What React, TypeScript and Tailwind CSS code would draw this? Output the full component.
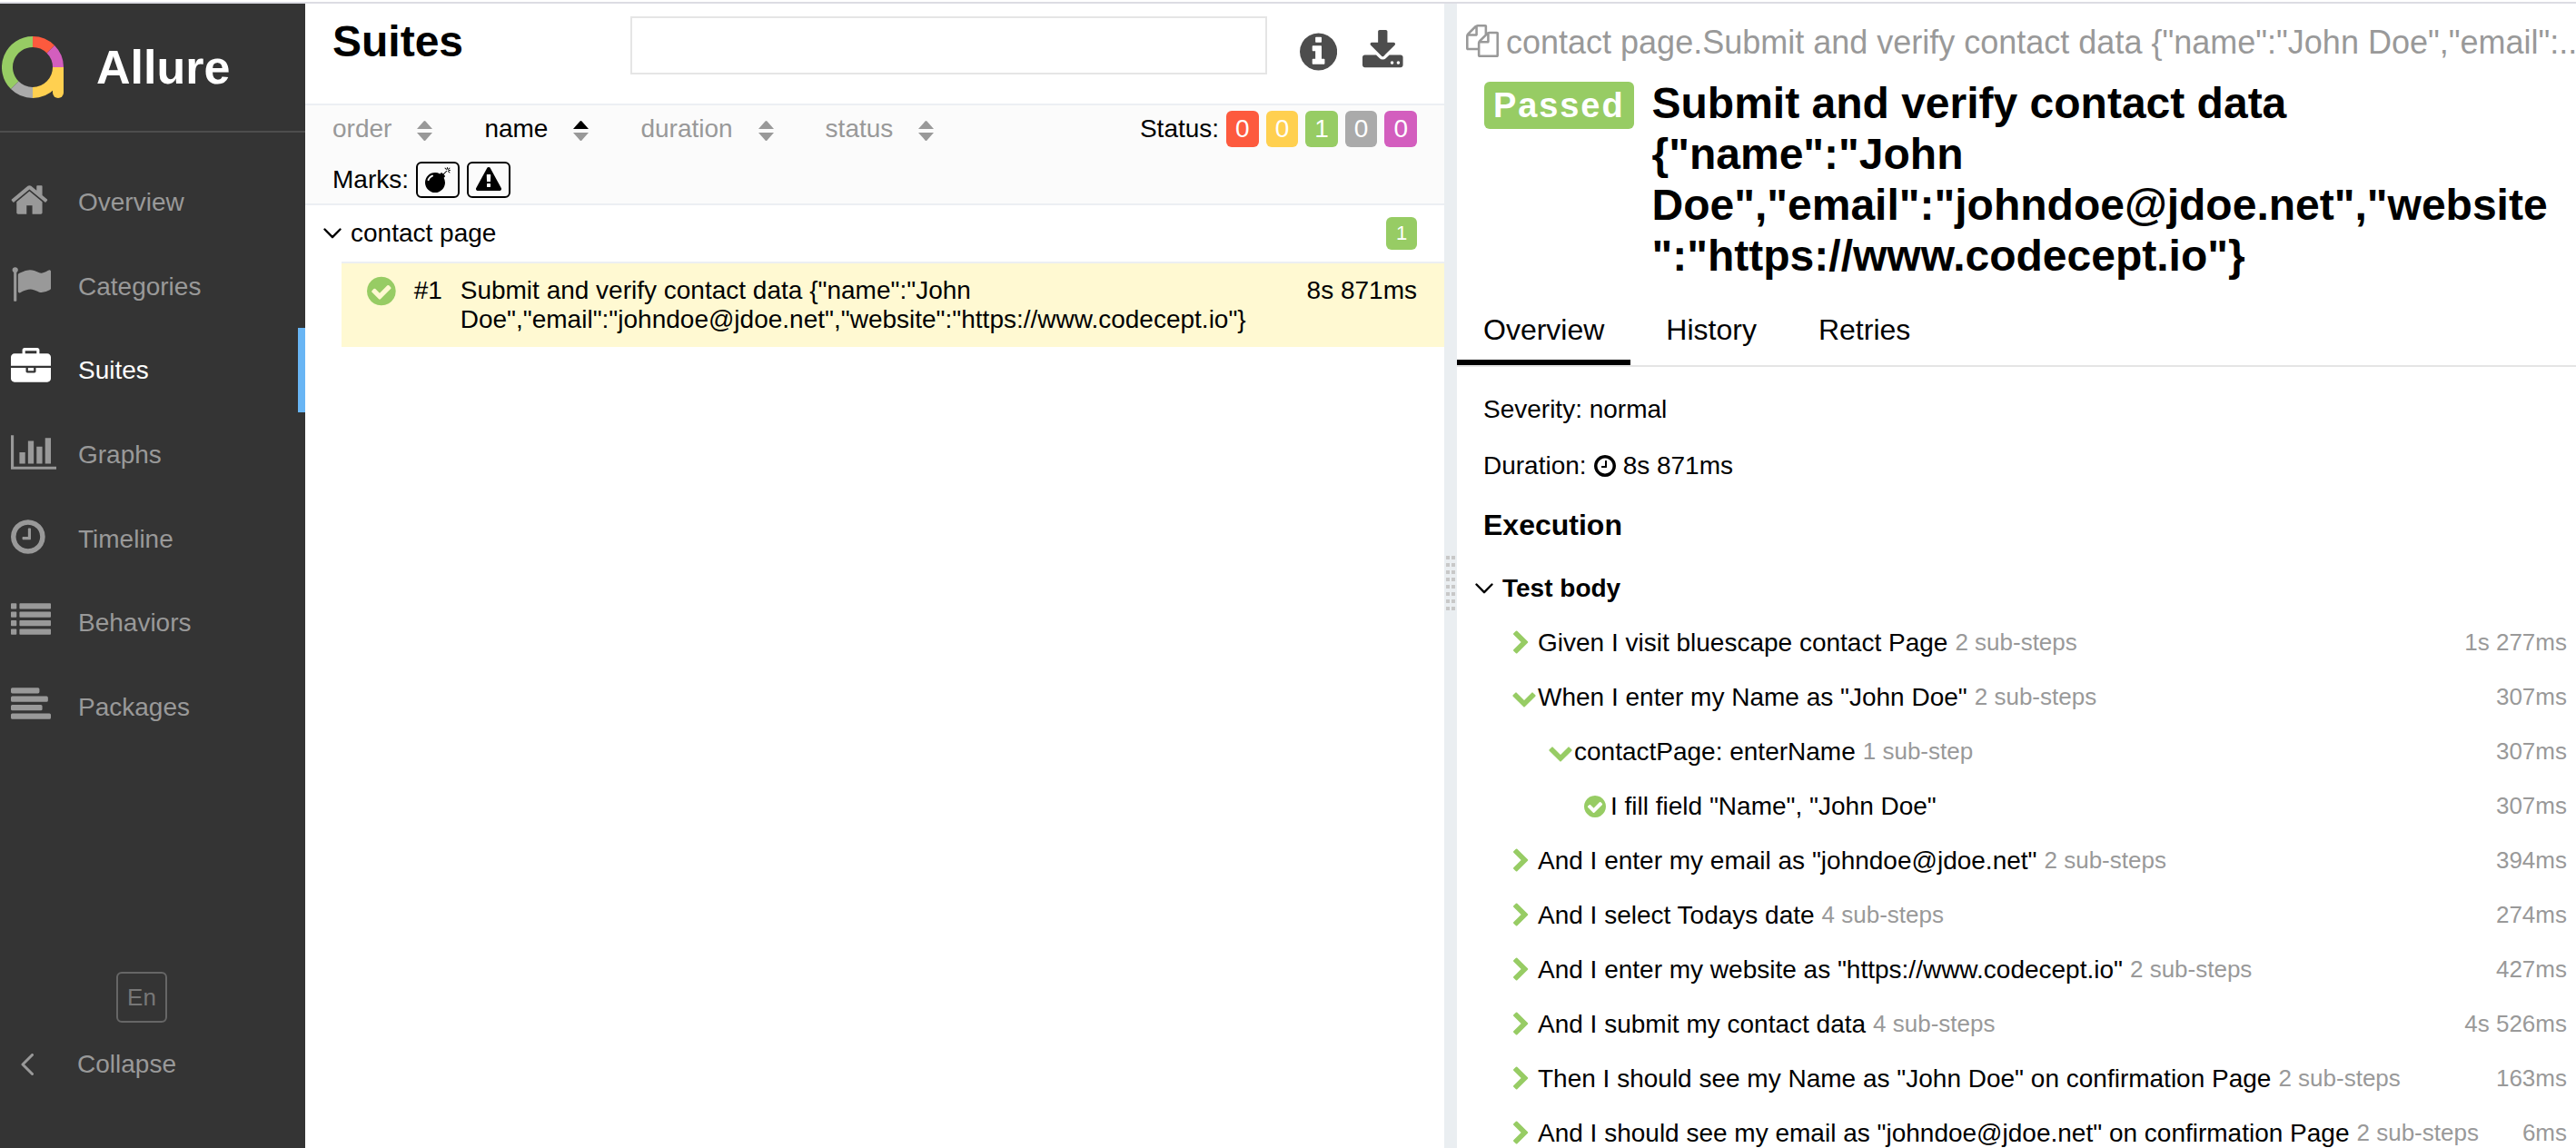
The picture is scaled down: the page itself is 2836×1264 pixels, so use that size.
import React from "react";

type Glyph = { d: string; x?: number; w?: number };

const CIRCLE =
  "q0 209-103 385.5t-279.5 279.5-385.5 103-385.5-103-279.5-279.5-103-385.5 103-385.5 279.5-279.5 385.5-103 385.5 103 279.5 279.5 103 385.5z";

const glyphs: Record<string, Glyph> = {
  home: {
    d: "M1472 992v480q0 26-19 45t-45 19h-384v-384h-256v384h-384q-26 0-45-19t-19-45v-480q0-1 .5-3t.5-3l575-474 575 474q1 2 1 6zm223-69l-62 74q-8 9-21 11h-3q-13 0-21-7l-692-577-692 577q-12 8-24 7-13-2-21-11l-62-74q-8-10-7-23.5t11-21.5l719-599q32-26 76-26t76 26l244 204v-195q0-14 9-23t23-9h192q14 0 23 9t9 23v408l219 182q10 8 11 21.5t-7 23.5z",
    x: 64,
    w: 1664,
  },
  flag: {
    d: "M320 256q0 72-64 110v1266q0 13-9.5 22.5t-22.5 9.5h-64q-13 0-22.5-9.5t-9.5-22.5v-1266q-64-38-64-110 0-53 37.5-90.5t90.5-37.5 90.5 37.5 37.5 90.5zm1472 64v763q0 25-12.5 38.5t-39.5 27.5q-215 116-369 116-61 0-123.5-22t-108.5-48-115.5-48-142.5-22q-192 0-464 146-17 9-33 9-26 0-45-19t-19-45v-742q0-32 31-55 21-14 79-43 236-120 421-120 107 0 200 29t219 88q38 19 88 19 54 0 117.5-21t110-47 88-47 54.5-21q26 0 45 19t19 45z",
  },
  briefcase: {
    d: "M640 256h512v-128h-512v128zm1152 640v480q0 66-47 113t-113 47h-1472q-66 0-113-47t-47-113v-480h672v160q0 26 19 45t45 19h320q26 0 45-19t19-45v-160h672zm-768 0v128h-256v-128h256zm768-480v384h-1792v-384q0-66 47-113t113-47h352v-160q0-40 28-68t68-28h576q40 0 68 28t28 68v160h352q66 0 113 47t47 113z",
  },
  chart: {
    d: "M640 896v512h-256v-512h256zm384-512v1024h-256v-1024h256zm1024 1152v128h-2048v-1536h128v1408h1920zm-640-896v768h-256v-768h256zm384-384v1152h-256v-1152h256z",
    w: 2048,
  },
  clock: {
    d:
      "M1024 544v448q0 14-9 23t-23 9h-320q-14 0-23-9t-9-23v-64q0-14 9-23t23-9h224v-352q0-14 9-23t23-9h64q14 0 23 9t9 23zm416 352q0-148-73-273t-198-198-273-73-273 73-198 198-73 273 73 273 198 198 273 73 273-73 198-198 73-273zm224 0" +
      CIRCLE,
    x: 128,
    w: 1536,
  },
  list: {
    d: "M32 128h192q32 0 32 32v192q0 32-32 32h-192q-32 0-32-32v-192q0-32 32-32zM32 512h192q32 0 32 32v192q0 32-32 32h-192q-32 0-32-32v-192q0-32 32-32zM32 896h192q32 0 32 32v192q0 32-32 32h-192q-32 0-32-32v-192q0-32 32-32zM32 1280h192q32 0 32 32v192q0 32-32 32h-192q-32 0-32-32v-192q0-32 32-32zM416 128h1344q32 0 32 32v192q0 32-32 32h-1344q-32 0-32-32v-192q0-32 32-32zM416 512h1344q32 0 32 32v192q0 32-32 32h-1344q-32 0-32-32v-192q0-32 32-32zM416 896h1344q32 0 32 32v192q0 32-32 32h-1344q-32 0-32-32v-192q0-32 32-32zM416 1280h1344q32 0 32 32v192q0 32-32 32h-1344q-32 0-32-32v-192q0-32 32-32z",
  },
  align: {
    d: "M64 128h1152q64 0 64 64v128q0 64-64 64h-1152q-64 0-64-64v-128q0-64 64-64zM64 512h1536q64 0 64 64v128q0 64-64 64h-1536q-64 0-64-64v-128q0-64 64-64zM64 896h1280q64 0 64 64v128q0 64-64 64h-1280q-64 0-64-64v-128q0-64 64-64zM64 1280h1664q64 0 64 64v128q0 64-64 64h-1664q-64 0-64-64v-128q0-64 64-64z",
  },
  info: {
    d:
      "M1152 1376v-160q0-14-9-23t-23-9h-96v-512q0-14-9-23t-23-9h-320q-14 0-23 9t-9 23v160q0 14 9 23t23 9h96v320h-96q-14 0-23 9t-9 23v160q0 14 9 23t23 9h448q14 0 23-9t9-23zm-128-896v-160q0-14-9-23t-23-9h-192q-14 0-23 9t-9 23v160q0 14 9 23t23 9h192q14 0 23-9t9-23zm640 416" +
      CIRCLE,
    x: 128,
    w: 1536,
  },
  download: {
    d: "M1344 1344q0-26-19-45t-45-19-45 19-19 45 19 45 45 19 45-19 19-45zm256 0q0-26-19-45t-45-19-45 19-19 45 19 45 45 19 45-19 19-45zm128-224v320q0 40-28 68t-68 28h-1472q-40 0-68-28t-28-68v-320q0-40 28-68t68-28h465l135 136q58 56 136 56t136-56l136-136h464q40 0 68 28t28 68zm-325-569q17 41-14 70l-448 448q-18 19-45 19t-45-19l-448-448q-31-29-14-70 17-39 59-39h256v-448q0-26 19-45t45-19h256q26 0 45 19t19 45v448h256q42 0 59 39z",
    x: 64,
    w: 1664,
  },
  bomb: {
    d: "M571 589q-10-25-34-35t-49 0q-108 44-191 127t-127 191q-10 25 0 49t35 34q13 5 24 5 42 0 60-40 34-84 98.5-148.5t148.5-98.5q25-11 35-35t0-49zm942-356l46 46-244 243 68 68q19 19 19 45.5t-19 45.5l-64 64q89 161 89 343 0 143-55.5 273.5t-150 225-225 150-273.5 55.5-273.5-55.5-225-150-150-225-55.5-273.5 55.5-273.5 150-225 225-150 273.5-55.5q182 0 343 89l64-64q19-19 45.5-19t45.5 19l68 68zm8-56q-10 10-22 10-13 0-23-10l-91-90q-9-10-9-23t9-23q10-9 23-9t23 9l90 91q10 9 10 22.5t-10 22.5zm230 230q-11 9-23 9t-23-9l-90-91q-10-9-10-22.5t10-22.5q9-10 22.5-10t22.5 10l91 90q9 10 9 23t-9 23zm41-183q0 14-9 23t-23 9h-96q-14 0-23-9t-9-23 9-23 23-9h96q14 0 23 9t9 23zm-192-192v96q0 14-9 23t-23 9-23-9-9-23v-96q0-14 9-23t23-9 23 9 9 23zm151 55l-91 90q-10 10-22 10-13 0-23-10-10-9-10-22.5t10-22.5l90-91q10-9 23-9t23 9q9 10 9 23t-9 23z",
  },
  warning: {
    d: "M1024 1375v-190q0-14-9.5-23.5t-22.5-9.5h-192q-13 0-22.5 9.5t-9.5 23.5v190q0 14 9.5 23.5t22.5 9.5h192q13 0 22.5-9.5t9.5-23.5zm-2-374l18-459q0-12-10-19-13-11-24-11h-220q-11 0-24 11-10 7-10 21l17 457q0 10 10 16.5t24 6.5h185q14 0 23.5-6.5t10.5-16.5zm-14-934l768 1408q35 63-2 126-17 29-46.5 46t-63.5 17h-1536q-34 0-63.5-17t-46.5-46q-37-63-2-126l768-1408q17-31 47-49t65-18 65 18 47 49z",
  },
  check: {
    d:
      "M1412 734q0-28-18-46l-91-90q-19-19-45-19t-45 19l-408 407-226-226q-19-19-45-19t-45 19l-91 90q-18 18-18 46 0 27 18 45l362 362q19 19 45 19 27 0 46-19l543-543q18-18 18-45zm252 162" +
      CIRCLE,
    x: 128,
    w: 1536,
  },
  files: {
    d: "M1696 384q40 0 68 28t28 68v1216q0 40-28 68t-68 28h-960q-40 0-68-28t-28-68v-288h-544q-40 0-68-28t-28-68v-672q0-40 20-88t48-76l408-408q28-28 76-48t88-20h416q40 0 68 28t28 68v328q68-40 128-40h416zm-544 213l-299 299h299v-299zm-640-384l-299 299h299v-299zm196 647l316-316v-416h-384v416q0 40-28 68t-68 28h-416v640h512v-256q0-40 20-88t48-76zm956 804v-1152h-384v416q0 40-28 68t-68 28h-416v640h896z",
  },
  right: {
    d: "M1363 877l-742 742q-19 19-45 19t-45-19l-166-166q-19-19-19-45t19-45l531-531-531-531q-19-19-19-45t19-45l166-166q19-19 45-19t45 19l742 742q19 19 19 45t-19 45z",
    x: 216,
    w: 1280,
  },
  down: {
    d: "M1683 808l-742 741q-19 19-45 19t-45-19l-742-741q-19-19-19-45.5t19-45.5l166-165q19-19 45-19t45 19l531 531 531-531q19-19 45-19t45 19l166 165q19 19 19 45.5t-19 45.5z",
  },
};

function Icon({ name, className }: { name: string; className: string }) {
  const g = glyphs[name];
  return (
    <svg
      aria-hidden="true"
      fill="currentColor"
      viewBox={`${g.x ?? 0} 0 ${g.w ?? 1792} 1792`}
      className={`w-auto shrink-0 ${className}`}
    >
      <path d={g.d} />
    </svg>
  );
}

function ThinChevron() {
  return (
    <svg aria-hidden="true" viewBox="0 0 20 12" fill="none" stroke="currentColor" strokeWidth="2.4" strokeLinecap="round" strokeLinejoin="round" className="h-3 w-5 shrink-0">
      <path d="M1.5 1.5 10 10.2 18.5 1.5" />
    </svg>
  );
}

function Logo() {
  return (
    <svg aria-hidden="true" viewBox="0 0 68 68" fill="none" strokeWidth="12" className="size-[68px] shrink-0">
      <path d="M14.2 53.8A28 28 0 0 1 34 6" stroke="#97cc64" />
      <path d="M34 6A28 28 0 0 1 53.8 14.2" stroke="#fd5a3e" />
      <path d="M53.8 14.2A28 28 0 0 1 62 34" stroke="#d35ebe" />
      <path d="M62 34A28 28 0 0 1 34 62" stroke="#ffd050" />
      <path d="M34 62A28 28 0 0 1 14.2 53.8" stroke="#aaa" />
      <path d="M56 34h12v28a6 6 0 0 1-12 0z" fill="#ffd050" stroke="none" />
    </svg>
  );
}

const nav = [
  { label: "Overview", icon: "home" },
  { label: "Categories", icon: "flag" },
  { label: "Suites", icon: "briefcase", active: true },
  { label: "Graphs", icon: "chart" },
  { label: "Timeline", icon: "clock" },
  { label: "Behaviors", icon: "list" },
  { label: "Packages", icon: "align" },
];

function Sidebar() {
  return (
    <aside className="flex w-[336px] shrink-0 flex-col bg-[#343434] text-[#999]">
      <a href="#" className="flex h-[142px] items-center gap-9 border-b-2 border-[#4d4d4d] pl-0.5 text-white">
        <Logo />
        <span className="text-[52px] font-bold">Allure</span>
      </a>
      <nav className="mt-[30px] flex h-[648px] flex-col">
        {nav.map((n) => (
          <a
            key={n.label}
            href="#"
            className={
              n.active
                ? "flex flex-1 items-center border-r-8 border-[#68b5f4] pt-0.5 pl-3 text-white"
                : "flex flex-1 items-center pt-0.5 pl-3"
            }
          >
            <span className="mb-1.5 w-[74px]">
              <Icon name={n.icon} className="h-11" />
            </span>
            {n.label}
          </a>
        ))}
      </nav>
      <div className="mt-auto flex flex-col pb-16">
        <button className="ml-32 size-14 rounded-md border-2 border-[#666] text-[26px] text-[#777]">En</button>
        <button className="mt-[18px] flex h-14 items-center pl-[23px]">
          <svg aria-hidden="true" viewBox="0 0 14 24" fill="none" stroke="currentColor" strokeWidth="3" strokeLinecap="round" strokeLinejoin="round" className="mr-12 h-6 w-3.5">
            <path d="M12.5 1.5 2 12l10.500 10.500" />
          </svg>
          Collapse
        </button>
      </div>
    </aside>
  );
}

const sorters = ["order", "name", "duration", "status"];
const statuses = [
  { name: "failed", n: 0, cls: "bg-[#fd5a3e]" },
  { name: "broken", n: 0, cls: "bg-[#ffd050]" },
  { name: "passed", n: 1, cls: "bg-[#97cc64]" },
  { name: "skipped", n: 0, cls: "bg-[#aaa]" },
  { name: "unknown", n: 0, cls: "bg-[#d35ebe]" },
];

function Suites() {
  return (
    <main className="flex min-w-0 flex-[1254] flex-col">
      <header className="flex h-28 shrink-0 items-start border-b-2 border-[#eceff3] pr-[45px] pl-[30px]">
        <h1 className="w-[328px] pt-3.5 text-[48px] leading-14 font-bold">Suites</h1>
        <input aria-label="Search suites" className="mt-3.5 h-16 min-w-0 flex-1 border-2 border-[#e5e5e5] px-4 outline-none" />
        <button aria-label="Information" className="mt-[29px] ml-9 text-[#4d4d4d]">
          <Icon name="info" className="h-12" />
        </button>
        <button aria-label="Download" className="mt-[29px] ml-7 text-[#4d4d4d]">
          <Icon name="download" className="h-12" />
        </button>
      </header>
      <div className="flex h-[110px] shrink-0 flex-col border-b-2 border-[#eceff3] bg-[#fbfbfb] px-[30px] pt-1.5">
        <div className="flex h-10 items-center">
          {sorters.map((s) => {
            const active = s === "name";
            return (
              <button key={s} className={active ? "mr-[57px] flex items-center gap-7" : "mr-[57px] flex items-center gap-7 text-[#999]"}>
                {s}
                <svg aria-hidden="true" viewBox="0 0 17 22" className="mt-1 h-[22px] w-[17px]">
                  <path d="M0 9 7.500 .6q1-1.200 2 0L17 9z" fill={active ? "#000" : "#999"} />
                  <path d="M0 13h17L9.500 21.400q-1 1.200-2 0z" fill="#999" />
                </svg>
              </button>
            );
          })}
          <div className="ml-auto flex items-center gap-2">
            <span>Status:</span>
            {statuses.map((s) => (
              <button key={s.name} aria-label={`${s.name}: ${s.n}`} className={`h-10 rounded-md px-2.5 text-white ${s.cls}`}>
                {s.n}
              </button>
            ))}
          </div>
        </div>
        <div className="mt-4 flex h-10 items-center gap-2">
          Marks:
          <button aria-label="Flaky" className="flex h-10 w-12 items-center justify-center rounded-md border-2 border-black">
            <Icon name="bomb" className="h-7" />
          </button>
          <button aria-label="New failed" className="flex h-10 w-12 items-center justify-center rounded-md border-2 border-black">
            <Icon name="warning" className="h-7" />
          </button>
        </div>
      </div>
      <button className="flex h-[62px] shrink-0 items-center gap-2.5 pr-[30px] pl-5 text-left">
        <ThinChevron />
        <span className="flex-1">contact page</span>
        <span className="flex h-9 w-[34px] items-center justify-center rounded-md bg-[#97cc64] text-[22px] text-white">1</span>
      </button>
      <a href="#" className="ml-10 flex items-start border-t-2 border-[#eceff3] bg-[#fff9d2] pt-3 pr-[30px] pb-3.5 pl-7 leading-8">
        <Icon name="check" className="mr-5 h-[37px] text-[#97cc64]" />
        <span className="w-[51px] pt-0.5">#1</span>
        <span className="min-w-0 flex-1 pt-0.5 pr-24">
          Submit and verify contact data {'{"name":"John'}
          <br />
          {'Doe","email":"johndoe@jdoe.net","website":"https://www.codecept.io"}'}
        </span>
        <span className="pt-0.5">8s 871ms</span>
      </a>
    </main>
  );
}

type Step = { text: string; sub?: string; time: string; level: number; icon: string };

const steps: Step[] = [
  { text: "Given I visit bluescape contact Page", sub: "2 sub-steps", time: "1s 277ms", level: 0, icon: "right" },
  { text: 'When I enter my Name as "John Doe"', sub: "2 sub-steps", time: "307ms", level: 0, icon: "down" },
  { text: "contactPage: enterName", sub: "1 sub-step", time: "307ms", level: 1, icon: "down" },
  { text: 'I fill field "Name", "John Doe"', time: "307ms", level: 2, icon: "check" },
  { text: 'And I enter my email as "johndoe@jdoe.net"', sub: "2 sub-steps", time: "394ms", level: 0, icon: "right" },
  { text: "And I select Todays date", sub: "4 sub-steps", time: "274ms", level: 0, icon: "right" },
  { text: 'And I enter my website as "https://www.codecept.io"', sub: "2 sub-steps", time: "427ms", level: 0, icon: "right" },
  { text: "And I submit my contact data", sub: "4 sub-steps", time: "4s 526ms", level: 0, icon: "right" },
  { text: 'Then I should see my Name as "John Doe" on confirmation Page', sub: "2 sub-steps", time: "163ms", level: 0, icon: "right" },
  { text: 'And I should see my email as "johndoe@jdoe.net" on confirmation Page', sub: "2 sub-steps", time: "6ms", level: 0, icon: "right" },
];

const indents = ["pl-[60px]", "pl-[100px]", "pl-[140px]"];

function Details() {
  return (
    <section className="flex min-w-0 flex-[1232] flex-col">
      <div className="flex h-[82px] shrink-0 items-center gap-2 pl-2.5 text-[36px] text-[#999]">
        <button aria-label="Copy path">
          <Icon name="files" className="h-9" />
        </button>
        <span className="mt-1 overflow-hidden leading-[44px] whitespace-nowrap">
          {'contact page.Submit and verify contact data {"name":"John Doe","email":...'}
        </span>
      </div>
      <div className="flex items-start gap-5 pr-[30px] pl-[30px]">
        <span className="mt-1 flex h-[52px] shrink-0 items-center rounded-md bg-[#97cc64] px-2.5 text-[38px] font-bold tracking-wider text-white">Passed</span>
        <h2 className="min-w-0 flex-1 text-[48px] leading-14 font-bold break-words">
          {'Submit and verify contact data {"name":"John Doe","email":"johndoe@jdoe.net","website":"https://www.codecept.io"}'}
        </h2>
      </div>
      <div role="tablist" className="mt-2 flex h-[86px] shrink-0 gap-2.5 border-b-2 border-[#e5e5e5] text-[32px]">
        <button role="tab" aria-selected="true" className="border-b-6 border-black px-[29px] pt-3">Overview</button>
        <button role="tab" aria-selected="false" className="border-b-6 border-transparent px-[29px] pt-3">History</button>
        <button role="tab" aria-selected="false" className="border-b-6 border-transparent px-[29px] pt-3">Retries</button>
      </div>
      <div className="flex flex-col pt-4">
        <p className="flex h-[62px] items-center pl-[29px]">Severity: normal</p>
        <p className="flex h-[62px] items-center gap-2 pl-[29px]">
          Duration: <Icon name="clock" className="h-7" /> 8s 871ms
        </p>
        <h3 className="flex h-[74px] items-center pb-1.5 pl-[29px] text-[32px] font-bold">Execution</h3>
        <button className="flex h-[60px] items-center gap-2.5 pl-5 font-bold">
          <ThinChevron />
          Test body
        </button>
        <ul>
          {steps.map((s) => (
            <li key={s.text}>
              <button className={`flex h-[60px] w-full items-center pr-2.5 text-left whitespace-nowrap ${indents[s.level]}`}>
                <span className="flex w-[29px] shrink-0">
                  <Icon name={s.icon} className="h-7 text-[#97cc64]" />
                </span>
                <span>{s.text}</span>
                <span className="ml-2 pb-0.5 text-[26px] text-[#999]">{s.sub}</span>
                <span className="ml-auto pb-0.5 text-[26px] text-[#999]">{s.time}</span>
              </button>
            </li>
          ))}
        </ul>
      </div>
    </section>
  );
}

export default function App() {
  return (
    <div className="flex h-screen flex-col overflow-hidden bg-white pt-0.5 font-['Liberation_Sans',Arial,sans-serif] text-[28px] leading-9 text-black">
      <div className="flex min-h-0 flex-1 overflow-hidden border-t-2 border-[#dcdce3]">
        <Sidebar />
        <Suites />
        <div role="separator" aria-orientation="vertical" className="flex w-3.5 shrink-0 cursor-col-resize items-center justify-center bg-[#eaeef1]">
          <div className="mt-4 grid grid-cols-2 gap-x-0.5 gap-y-1">
            {Array.from({ length: 16 }, (_, i) => (
              <span key={i} className="size-1 bg-[#c8c8c8]" />
            ))}
          </div>
        </div>
        <Details />
      </div>
    </div>
  );
}
